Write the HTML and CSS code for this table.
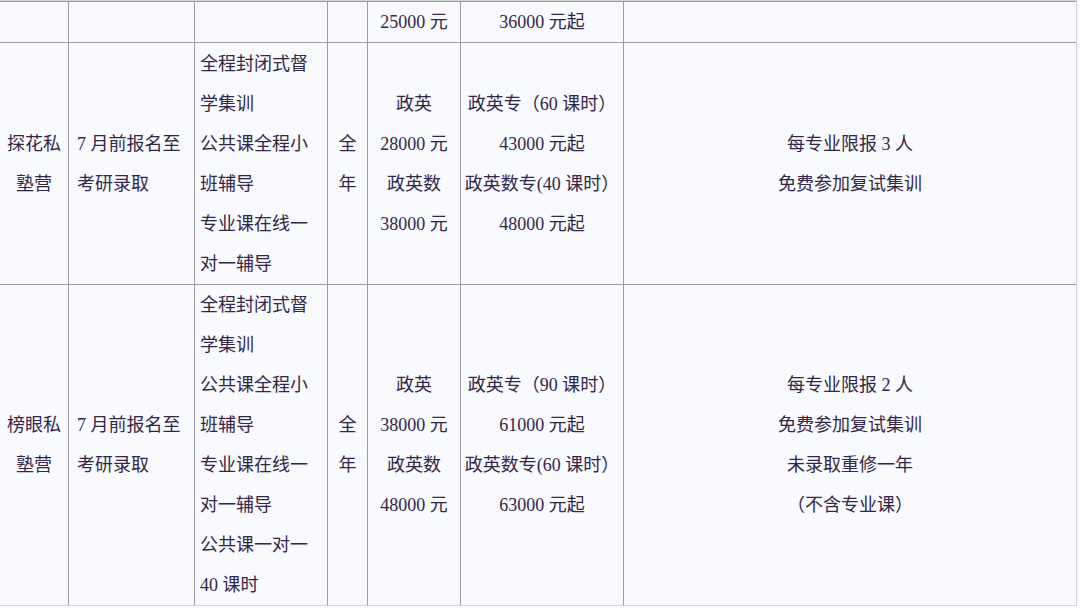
FILE: index.html
```html
<!DOCTYPE html>
<html lang="zh-CN">
<head>
<meta charset="utf-8">
<title>私塾营</title>
<link rel="stylesheet" href="styles.css">
</head>
<body>
<div class="sheet">
  <div class="grid">
    <!-- row 0 (partial) -->
    <div class="cell"></div>
    <div class="cell"></div>
    <div class="cell"></div>
    <div class="cell"></div>
    <div class="cell center"><div>25000 元</div></div>
    <div class="cell center"><div>36000 元起</div></div>
    <div class="cell"></div>

    <!-- row 1 -->
    <div class="cell center"><div>探花私</div><div>塾营</div></div>
    <div class="cell left pad8"><div>7 月前报名至</div><div>考研录取</div></div>
    <div class="cell left pad5">
      <div>全程封闭式督</div><div>学集训</div><div>公共课全程小</div><div>班辅导</div><div>专业课在线一</div><div>对一辅导</div>
    </div>
    <div class="cell center"><div>全</div><div>年</div></div>
    <div class="cell center"><div>政英</div><div>28000 元</div><div>政英数</div><div>38000 元</div></div>
    <div class="cell center"><div>政英专（60 课时）</div><div>43000 元起</div><div>政英数专(40 课时）</div><div>48000 元起</div></div>
    <div class="cell center"><div>每专业限报 3 人</div><div>免费参加复试集训</div></div>

    <!-- row 2 -->
    <div class="cell center"><div>榜眼私</div><div>塾营</div></div>
    <div class="cell left pad8"><div>7 月前报名至</div><div>考研录取</div></div>
    <div class="cell left pad5">
      <div>全程封闭式督</div><div>学集训</div><div>公共课全程小</div><div>班辅导</div><div>专业课在线一</div><div>对一辅导</div><div>公共课一对一</div><div>40 课时</div>
    </div>
    <div class="cell center"><div>全</div><div>年</div></div>
    <div class="cell center"><div>政英</div><div>38000 元</div><div>政英数</div><div>48000 元</div></div>
    <div class="cell center"><div>政英专（90 课时）</div><div>61000 元起</div><div>政英数专(60 课时）</div><div>63000 元起</div></div>
    <div class="cell center"><div>每专业限报 2 人</div><div>免费参加复试集训</div><div>未录取重修一年</div><div>（不含专业课）</div></div>
  </div>
</div>
</body>
</html>
```
FILE: styles.css
```css
html, body {
  margin: 0;
  padding: 0;
  background: #f8fafd;
}

.sheet {
  width: 1080px;
  height: 608px;
  overflow: hidden;
  background: #f8fafd;
}

.grid {
  display: grid;
  grid-template-columns: 68px 125px 132px 39px 92px 162px 452px;
  grid-template-rows: 40px 241px 320px;
  gap: 1px;
  width: 1077px;
  padding: 1px 0 0 0;
  box-sizing: border-box;
  background: #9b9aa6;
  border-top: 1px solid #d3d7d4;
  border-right: 1px solid #cfd2d8;
  border-bottom: 1px solid #d0d3d9;
}

.cell {
  background: #f8fafd;
  display: flex;
  flex-direction: column;
  justify-content: center;
  font-family: "Liberation Serif", "Noto Sans CJK SC", serif;
  font-size: 18px;
  line-height: 40px;
  color: #33264a;
  white-space: nowrap;
}

.center {
  align-items: center;
  text-align: center;
}

.left {
  align-items: flex-start;
}

.pad8 {
  padding-left: 8px;
}

.pad5 {
  padding-left: 5px;
}
```
